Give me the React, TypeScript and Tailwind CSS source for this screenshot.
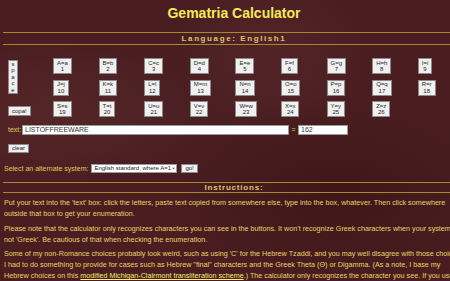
import React from "react";

const rows: [string, number][] = [
  ["A=a", 1], ["B=b", 2], ["C=c", 3], ["D=d", 4], ["E=e", 5], ["F=f", 6], ["G=g", 7], ["H=h", 8], ["I=i", 9],
  ["J=j", 10], ["K=k", 11], ["L=l", 12], ["M=m", 13], ["N=n", 14], ["O=o", 15], ["P=p", 16], ["Q=q", 17], ["R=r", 18],
  ["S=s", 19], ["T=t", 20], ["U=u", 21], ["V=v", 22], ["W=w", 23], ["X=x", 24], ["Y=y", 25], ["Z=z", 26],
];

const btn =
  "bg-[#f0f0f0] border border-[#8a8a8a] text-[#222] text-[6px] leading-[6.5px] font-['Liberation_Sans',Arial,sans-serif]";

export default function App() {
  return (
    <div className="w-[450px] h-[281px] overflow-hidden bg-[#4a1e21] font-['Liberation_Sans',Arial,sans-serif] bg-[radial-gradient(ellipse_at_10%_40%,#552628_0%,transparent_30%),radial-gradient(ellipse_at_75%_70%,#3f1618_0%,transparent_35%),radial-gradient(ellipse_at_60%_20%,#532427_0%,transparent_25%)]">
      <div className="w-[462px] ml-[3px]">
        <div className="pt-[5px] text-center text-[14px] leading-[17px] font-bold text-[#f3ea57]">
          Gematria Calculator
        </div>
        <div className="mt-[10px] border-y border-[#a48c2e] h-[13px] text-center text-[8px] leading-[11px] font-bold tracking-[1.6px] text-[#dcc56c]">
          Language: English1
        </div>

        <div className="mt-[13px] grid grid-cols-[50px_repeat(9,45.6px)] grid-rows-[16px_16px_16px] gap-y-[5.5px]">
          <button className={`${btn} col-start-1 row-start-1 row-span-2 self-center justify-self-start ml-[5px] w-[10px] h-[34px] px-0 text-[6px] leading-[6.4px] flex flex-col items-center justify-center`}>
            <span>s</span>
            <span>p</span>
            <span>a</span>
            <span>c</span>
            <span>e</span>
          </button>
          <button className={`${btn} col-start-1 row-start-3 self-center justify-self-start ml-[5px] h-[10px] px-[3px] mt-[3px] leading-[8px] text-[6.5px]`}>
            copa!
          </button>
          {rows.map(([l, n]) => (
            <button key={l} className={`${btn} justify-self-start h-[16px] px-[3px] flex flex-col items-center justify-center`}>
              <span>{l}</span>
              <span>{n}</span>
            </button>
          ))}
        </div>

        <div className="mt-[8px] flex items-center ml-[5px] text-[7px] text-[#e0c95e]">
          <span className="w-[14px]">text:</span>
          <div className="w-[267px] h-[10px] bg-white border border-[#999] text-[#333] text-[7px] leading-[8px] pl-[2px]">LISTOFFREEWARE</div>
          <span className="w-[9px] text-center">=</span>
          <div className="w-[50px] h-[10px] bg-white border border-[#999] text-[#333] text-[7px] leading-[8px] pl-[2px]">162</div>
        </div>

        <button className={`${btn} block mt-[8px] ml-[5px] h-[9px] px-[3px] text-[6.5px] leading-[7px]`}>clear</button>

        <div className="mt-[11px] flex items-center text-[7px] text-[#e0c95e] ml-[1px]">
          <span>Select an alternate system:</span>
          <div className="ml-[3px] w-[86px] h-[9px] bg-white border border-[#999] text-[#222] text-[6px] leading-[7px] pl-[2px] flex items-center justify-between pr-[1px] whitespace-nowrap overflow-hidden">
            <span>English standard, where A=1</span>
            <span className="text-[6px] leading-[4px] pb-[3px]">⌄</span>
          </div>
          <button className={`${btn} ml-[4px] h-[9px] px-[3px] text-[6.5px] leading-[7px]`}>go!</button>
        </div>

        <div className="mt-[8px] border-y border-[#a48c2e] h-[11px] text-center text-[8px] leading-[9px] font-bold tracking-[0.8px] text-[#dcc56c]">
          Instructions:
        </div>

        <div className="mt-[4px] ml-[1px] flex flex-col gap-[3.5px] text-[7.2px] leading-[11px] text-[#e8d46a]">
          <p>
            Put your text into the 'text' box: click the letters, paste text copied from somewhere else, type into the box, whatever. Then click somewhere outside that box to get your enumeration.
          </p>
          <p>
            Please note that the calculator only recognizes characters you can see in the buttons. It won't recognize Greek characters when your system is not 'Greek'. Be cautious of that when checking the enumeration.
          </p>
          <p>
            Some of my non-Romance choices probably look weird, such as using 'C' for the Hebrew Tzaddi, and you may well disagree with those choices. I had to do something to provide for cases such as Hebrew "final" characters and the Greek Theta (Θ) or Digamma. (As a note, I base my Hebrew choices on this{" "}
            <a className="underline text-[#f4ef72]">modified Michigan-Clairmont transliteration scheme</a>.) The calculator only recognizes the character you see. If you use the wrong case, the calculator will ignore that letter.
          </p>
        </div>
      </div>
    </div>
  );
}
